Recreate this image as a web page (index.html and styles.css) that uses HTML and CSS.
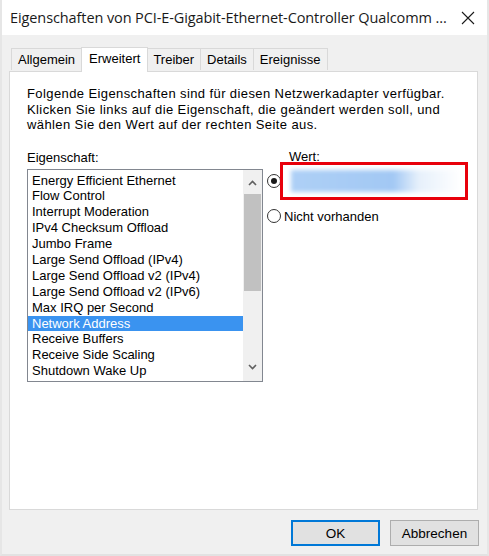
FILE: index.html
```html
<!DOCTYPE html>
<html>
<head>
<meta charset="utf-8">
<link rel="stylesheet" href="styles.css">
</head>
<body>
<div class="window">
  <div class="titlebar">
    <span class="title">Eigenschaften von PCI-E-Gigabit-Ethernet-Controller Qualcomm ...</span>
    <svg class="close" width="14" height="14" viewBox="0 0 14 14"><path d="M1 1 L13 13 M13 1 L1 13" stroke="#1a1a1a" stroke-width="1.1" fill="none"/></svg>
  </div>
  <div class="content">
    <div class="tabs">
      <div class="tab first">Allgemein</div>
      <div class="tab active">Erweitert</div>
      <div class="tab">Treiber</div>
      <div class="tab">Details</div>
      <div class="tab">Ereignisse</div>
    </div>
    <div class="panel">
      <p class="desc">Folgende Eigenschaften sind für diesen Netzwerkadapter verfügbar.<br>Klicken Sie links auf die Eigenschaft, die geändert werden soll, und<br>wählen Sie den Wert auf der rechten Seite aus.</p>
      <div class="columns">
        <div class="left">
          <div class="label">Eigenschaft:</div>
          <div class="listbox">
            <ul class="items">
              <li>Energy Efficient Ethernet</li>
              <li>Flow Control</li>
              <li>Interrupt Moderation</li>
              <li>IPv4 Checksum Offload</li>
              <li>Jumbo Frame</li>
              <li>Large Send Offload (IPv4)</li>
              <li>Large Send Offload v2 (IPv4)</li>
              <li>Large Send Offload v2 (IPv6)</li>
              <li>Max IRQ per Second</li>
              <li class="selected">Network Address</li>
              <li>Receive Buffers</li>
              <li>Receive Side Scaling</li>
              <li>Shutdown Wake Up</li>
            </ul>
            <div class="scrollbar">
              <svg class="arrow" width="19" height="21" viewBox="0 0 19 21"><path d="M6 15 L9.5 11.5 L13 15" stroke="#606060" stroke-width="1.6" fill="none"/></svg>
              <div class="track"><div class="thumb"></div></div>
              <svg class="arrow" width="19" height="21" viewBox="0 0 19 21"><path d="M6 5 L9.5 8.5 L13 5" stroke="#606060" stroke-width="1.6" fill="none"/></svg>
            </div>
          </div>
        </div>
        <div class="right">
          <div class="label wert">Wert:</div>
          <div class="valuerow">
            <span class="radio checked"></span>
            <div class="redbox"><div class="blur"></div></div>
          </div>
          <div class="radiorow">
            <span class="radio"></span>
            <span>Nicht vorhanden</span>
          </div>
        </div>
      </div>
    </div>
    <div class="buttons">
      <button class="btn default">OK</button>
      <button class="btn">Abbrechen</button>
    </div>
  </div>
</div>
</body>
</html>
```
FILE: styles.css
```css
* { box-sizing: border-box; }
html, body { margin: 0; padding: 0; }
body { width: 489px; height: 556px; background: #f0f0f0; overflow: hidden; }

.window {
  width: 489px; height: 556px;
  background: #f0f0f0;
  border-left: 2px solid #e6e6e6;
  border-right: 2px solid #e6e6e6;
  border-bottom: 2px solid #e2e2e2;
  font-family: "Liberation Sans", Arial, sans-serif;
  font-size: 13px;
  color: #000;
  display: flex; flex-direction: column;
}

.titlebar {
  height: 35px; background: #fff;
  display: flex; align-items: center; justify-content: space-between;
  padding: 0 12px 0 8px;
}
.title { font-family: "Open Sans", "Noto Sans", sans-serif; font-size: 14.5px; color: #1a1a1a; letter-spacing: -0.1px; }

.content { padding: 12px 9px 0 7px; display: flex; flex-direction: column; }

.tabs { display: flex; height: 24px; align-items: flex-end; padding-left: 2px; position: relative; z-index: 1; }
.tab {
  height: 22px; padding: 0 6px; line-height: 21px;
  border: 1px solid #d9d9d9; border-bottom: none; border-left: none;
  background: #f0f0f0; margin-bottom: 1px;
}
.tab.first { border-left: 1px solid #d9d9d9; }
.tab.active {
  background: #fff; line-height: 22px;
  border-left: 1px solid #d9d9d9; margin-left: -1px; margin-right: -1px; padding: 0 7px;
  position: relative; z-index: 2; margin-bottom: -1px; height: 25px;
}

.panel {
  height: 439px; background: #fff; border: 1px solid #d9d9d9;
  padding: 14px 0 0 17px;
}
.desc { margin: 0; line-height: 15.5px; letter-spacing: 0.4px; }

.columns { display: flex; margin-top: 17px; }
.left { width: 236px; }
.label { line-height: 16px; }
.listbox {
  margin-top: 3px; width: 236px; height: 213px;
  border: 1px solid #828790; display: flex; background: #fff;
}
.items { list-style: none; margin: 0; padding: 3px 0 0 0; flex: 1; }
.items li { height: 15.9px; line-height: 15.9px; padding-left: 4px; white-space: nowrap; }
.items li.selected { background: #3a93f0; color: #fff; }
.scrollbar { width: 19px; display: flex; flex-direction: column; background: #f0f0f0; }
.arrow { display: block; }
.track { flex: 1; }
.thumb { margin: 3px 1px 0 1px; height: 97px; background: #c1c1c1; }

.right { padding-left: 4px; }
.wert { padding-left: 22px; margin-top: -1px; margin-bottom: -3px; }
.valuerow { display: flex; align-items: center; }
.radio {
  width: 14px; height: 14px; border: 1px solid #333; border-radius: 50%;
  background: #fff; display: inline-flex; align-items: center; justify-content: center;
  flex: none;
}
.radio.checked::after { content: ""; width: 6px; height: 6px; border-radius: 50%; background: #1a1a1a; }
.redbox {
  margin-left: -1px; width: 188px; height: 38px;
  border: 3px solid #e8000b; background: #fff; padding: 5px 0 0 8px;
}
.blur {
  width: 170px; height: 22px;
  background: linear-gradient(90deg, #aed0f6 0%, #a2c8f4 60%, #e6f0fb 75%, #fff 100%);
  filter: blur(2px);
}
.radiorow { display: flex; align-items: center; gap: 3px; margin-top: 9px; }

.buttons { display: flex; justify-content: flex-end; gap: 10px; padding: 10px 0 0 0; margin-right: -1px; }
.btn {
  width: 89px; height: 26px; font-family: "Liberation Sans", Arial, sans-serif; font-size: 13.5px;
  background: #e1e1e1; border: 1px solid #adadad; color: #000; padding: 0;
}
.btn.default { border: 2px solid #0078d7; }
```
